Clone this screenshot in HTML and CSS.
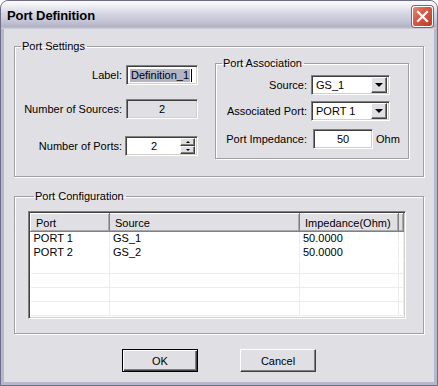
FILE: index.html
```html
<!DOCTYPE html>
<html lang="en">
<head>
  <meta charset="UTF-8" />
  <title>Port Definition</title>
  <link rel="stylesheet" href="styles.css">
</head>
<body>
  <div class="window">
    <!-- Title bar -->
    <div class="titlebar">
      <span class="title">Port Definition</span>
      <button class="close-btn" aria-label="Close">
        <svg width="13" height="13" viewBox="0 0 13 13">
          <path d="M2 2 L11 11 M11 2 L2 11" stroke="#fff" stroke-width="2.2" stroke-linecap="square" />
        </svg>
      </button>
    </div>

    <div class="client">
      <!-- Port Settings -->
      <fieldset class="group settings">
        <legend>Port Settings</legend>
        <div class="settings-body">
          <div class="settings-left">
            <div class="row row-label">
              <label>Label:</label>
              <div class="field w72"><span class="selected">Definition_1</span><span class="caret"></span></div>
            </div>
            <div class="row row-sources">
              <label>Number of Sources:</label>
              <div class="field w72 disabled center">2</div>
            </div>
            <div class="row row-ports">
              <label>Number of Ports:</label>
              <div class="field w73 spin">
                <span class="spin-value">2</span>
                <span class="spin-buttons">
                  <span class="spin-btn"><i class="arrow-up"></i></span>
                  <span class="spin-btn"><i class="arrow-down"></i></span>
                </span>
              </div>
            </div>
          </div>

          <!-- Port Association -->
          <fieldset class="group assoc">
            <legend>Port Association</legend>
            <div class="row row-source">
              <label>Source:</label>
              <div class="field combo"><span class="combo-text">GS_1</span><span class="drop-btn"><i class="arrow-down big"></i></span></div>
            </div>
            <div class="row row-assoc">
              <label>Associated Port:</label>
              <div class="field combo"><span class="combo-text">PORT 1</span><span class="drop-btn"><i class="arrow-down big"></i></span></div>
            </div>
            <div class="row row-imp">
              <label>Port Impedance:</label>
              <div class="field imp center">50</div>
              <span class="unit">Ohm</span>
            </div>
          </fieldset>
        </div>
      </fieldset>

      <!-- Port Configuration -->
      <fieldset class="group config">
        <legend>Port Configuration</legend>
        <div class="list">
          <table>
            <colgroup>
              <col style="width:79px">
              <col style="width:190px">
              <col style="width:99px">
              <col>
            </colgroup>
            <thead>
              <tr><th>Port</th><th>Source</th><th>Impedance(Ohm)</th><th></th></tr>
            </thead>
            <tbody>
              <tr><td>PORT 1</td><td>GS_1</td><td>50.0000</td><td></td></tr>
              <tr><td>PORT 2</td><td>GS_2</td><td>50.0000</td><td></td></tr>
              <tr><td></td><td></td><td></td><td></td></tr>
              <tr><td></td><td></td><td></td><td></td></tr>
              <tr><td></td><td></td><td></td><td></td></tr>
              <tr><td></td><td></td><td></td><td></td></tr>
            </tbody>
          </table>
        </div>
      </fieldset>

      <div class="buttons">
        <button class="btn default">OK</button>
        <button class="btn">Cancel</button>
      </div>
    </div>
  </div>
</body>
</html>
```

FILE: styles.css
```css
/* Basic reset */
* { margin: 0; padding: 0; box-sizing: border-box; }
html, body { width: 100%; height: 100%; }

body {
  background: #fff;
  font-family: 'Liberation Sans', Arial, sans-serif;
  font-size: 11px;
  color: #000;
}

/* Window frame */
.window {
  width: 438px;
  height: 386px;
  display: flex;
  flex-direction: column;
  border-radius: 8px 8px 0 0;
  border: 1px solid #6e6e88;
  background: #b7b7cb;
  overflow: hidden;
}

/* Title bar, silver theme */
.titlebar {
  height: 28px;
  flex: none;
  display: flex;
  align-items: center;
  justify-content: space-between;
  padding: 0 4px 0 6px;
  background: linear-gradient(#fdfdfe 0%, #eeeef4 18%, #d6d6e2 45%, #c2c2d4 75%, #b2b2c6 92%, #d2d2de 100%);
}

.title {
  font-weight: bold;
  font-size: 13px;
  color: #000;
  letter-spacing: -0.1px;
}

.close-btn {
  width: 21px;
  height: 21px;
  margin-top: 2px;
  border: 1px solid #fff;
  border-radius: 3px;
  background: linear-gradient(135deg, #e98a7c 0%, #d65a46 40%, #c13d28 100%);
  box-shadow: 0 0 0 1px #b0504a;
  display: flex;
  align-items: center;
  justify-content: center;
}

/* Client area */
.client {
  flex: 1;
  margin: 0 3px 3px 3px;
  background: #e0dfe3;
  padding: 11px 10px 0 10px;
  display: flex;
  flex-direction: column;
}

/* Etched group boxes */
.group {
  border: 1px solid #a0a0a4;
  box-shadow: 1px 1px 0 #fff, inset 1px 1px 0 #fff;
  min-width: 0;
}

.group legend {
  margin-left: 6px;
  padding: 0 2px 0 1px;
  line-height: 13px;
}

.settings {
  height: 137px;
  padding: 0 14px 0 0;
}

.settings-body {
  display: flex;
  justify-content: space-between;
}

.settings-left {
  width: 183px;
  padding-top: 12px;
}

.row {
  display: flex;
  align-items: center;
  justify-content: flex-end;
}

.row label {
  margin-right: 4px;
  white-space: nowrap;
  flex-shrink: 0;
}

.row-sources { margin-top: 14px; }
.row-ports { margin-top: 17px; }

/* Sunken edit field */
.field {
  height: 20px;
  flex-shrink: 0;
  background: #fff;
  border: 1px solid;
  border-color: #808080 #fff #fff #808080;
  box-shadow: inset 1px 1px 0 #404040, inset -1px -1px 0 #d4d0c8;
  display: flex;
  align-items: center;
  padding: 0 3px;
  white-space: nowrap;
}

.w72 { width: 72px; }
.w73 { width: 73px; margin-left: -1px; }

.center { justify-content: center; }

.field.disabled { background: #e0dfe3; }

.selected {
  background: #b2b4c4;
  padding: 0 1px;
  line-height: 13px;
}

.caret {
  width: 1px;
  height: 13px;
  background: #000;
  margin-left: 1px;
}

/* Spinner */
.spin { padding: 2px 2px 2px 2px; }

.spin-value {
  flex: 1;
  text-align: center;
}

.spin-buttons {
  width: 15px;
  height: 16px;
  display: flex;
  flex-direction: column;
}

.spin-btn {
  flex: 1;
  background: #e0dfe3;
  border: 1px solid;
  border-color: #fff #404040 #404040 #fff;
  box-shadow: inset -1px -1px 0 #808080;
  display: flex;
  align-items: center;
  justify-content: center;
}

.arrow-up, .arrow-down {
  width: 0;
  height: 0;
  border-left: 2px solid transparent;
  border-right: 2px solid transparent;
}
.arrow-up { border-bottom: 2px solid #000; }
.arrow-down { border-top: 2px solid #000; }
.arrow-down.big {
  border-left-width: 4px;
  border-right-width: 4px;
  border-top-width: 4px;
}

/* Port Association group */
.assoc {
  width: 194px;
  height: 102px;
  margin-top: 4px;
  padding: 0;
}

.assoc .row { justify-content: flex-start; }
.assoc .row label {
  width: 91px;
  text-align: right;
}

.row-source { margin-top: 5px; }
.row-assoc { margin-top: 6px; }
.row-imp { margin-top: 8px; }

.combo {
  width: 79px;
  padding: 2px 2px 2px 4px;
}

.combo-text { flex: 1; }

.drop-btn {
  width: 16px;
  height: 16px;
  background: #e0dfe3;
  border: 1px solid;
  border-color: #fff #404040 #404040 #fff;
  box-shadow: inset -1px -1px 0 #808080;
  display: flex;
  align-items: center;
  justify-content: center;
}

.imp {
  width: 60px;
  margin-left: 2px;
}

.unit {
  margin-left: 3px;
  white-space: nowrap;
}

/* Port Configuration group */
.config {
  margin-top: 13px;
  height: 144px;
  padding: 8px 17px 0 13px;
}

.list {
  height: 108px;
  background: #fff;
  border: 1px solid;
  border-color: #808080 #fff #fff #808080;
  box-shadow: inset 1px 1px 0 #404040, inset -1px -1px 0 #d4d0c8;
  padding: 1px 1px 1px 1px;
  overflow: hidden;
}

.list table {
  width: 100%;
  border-collapse: collapse;
  table-layout: fixed;
}

.list th {
  height: 18px;
  background: #e0dfe3;
  font-weight: normal;
  text-align: left;
  padding: 0 5px;
  border: 1px solid;
  border-color: #fff #808080 #808080 #fff;
  box-shadow: inset -1px -1px 0 #a8a8ac;
  white-space: nowrap;
}

.list td {
  height: 14px;
  padding: 0 2px 0 3px;
  border-right: 1px solid #ececec;
  border-bottom: 1px solid #ececec;
  line-height: 13px;
  white-space: nowrap;
}

.list tbody tr:first-child td,
.list tbody tr:nth-child(2) td { border-bottom-color: #fff; }

/* Dialog buttons */
.buttons {
  display: flex;
  justify-content: center;
  gap: 42px;
  margin-top: 15px;
}

.btn {
  width: 76px;
  height: 23px;
  font-family: inherit;
  font-size: 11px;
  background: #e0dfe3;
  border: 1px solid;
  border-color: #fff #404040 #404040 #fff;
  box-shadow: inset -1px -1px 0 #808080;
}

.btn.default {
  border: 1px solid #000;
  box-shadow: inset 1px 1px 0 #fff, inset -1px -1px 0 #404040, inset -2px -2px 0 #808080;
}
```
